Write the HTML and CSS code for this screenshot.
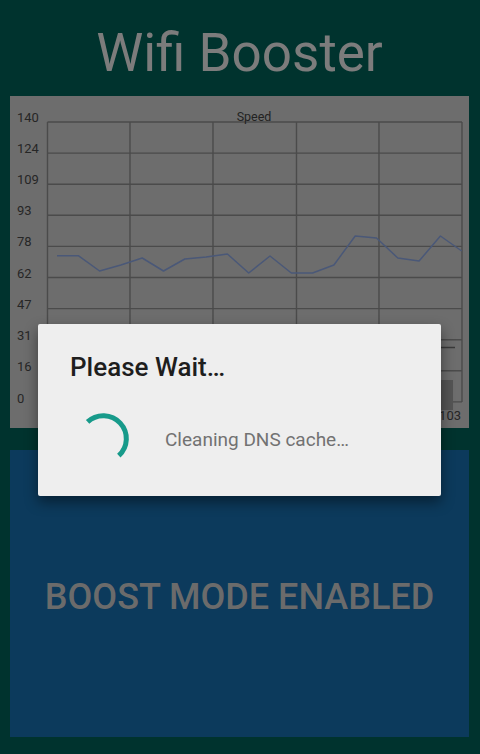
FILE: index.html
```html
<!DOCTYPE html>
<html>
<head>
<meta charset="utf-8">
<link rel="stylesheet" href="styles.css">
</head>
<body>
<div class="screen">
  <h1 class="title">Wifi Booster</h1>
  <div class="chart-card">
    <svg class="chart" width="459" height="332" viewBox="0 0 459 332">
      <g class="grid">
        <line x1="37.5" y1="26" x2="452" y2="26"/>
        <line x1="37.5" y1="57.1" x2="452" y2="57.1"/>
        <line x1="37.5" y1="88.2" x2="452" y2="88.2"/>
        <line x1="37.5" y1="119.3" x2="452" y2="119.3"/>
        <line x1="37.5" y1="150.4" x2="452" y2="150.4"/>
        <line x1="37.5" y1="181.5" x2="452" y2="181.5"/>
        <line x1="37.5" y1="212.6" x2="452" y2="212.6"/>
        <line x1="37.5" y1="243.7" x2="452" y2="243.7"/>
        <line x1="37.5" y1="274.8" x2="452" y2="274.8"/>
        <line x1="37.5" y1="305.9" x2="452" y2="305.9"/>
        <line x1="37.5" y1="26" x2="37.5" y2="306"/>
        <line x1="120" y1="26" x2="120" y2="306"/>
        <line x1="203" y1="26" x2="203" y2="306"/>
        <line x1="286.5" y1="26" x2="286.5" y2="306"/>
        <line x1="369" y1="26" x2="369" y2="306"/>
        <line x1="452" y1="26" x2="452" y2="306"/>
      </g>
      <g class="ylabels">
        <text x="7" y="25.5">140</text>
        <text x="7" y="56.6">124</text>
        <text x="7" y="88.2">109</text>
        <text x="7" y="119.3">93</text>
        <text x="7" y="150.4">78</text>
        <text x="7" y="181.5">62</text>
        <text x="7" y="212.6">47</text>
        <text x="7" y="244">31</text>
        <text x="7" y="275">16</text>
        <text x="7" y="306.5">0</text>
      </g>
      <text class="chart-title" x="244" y="24.5" text-anchor="middle">Speed</text>
      <polyline class="series" points="47,159.7 68.3,159.7 89.6,175 110.9,169 132.2,162 153.5,175 174.8,163 196.1,161 217.4,158 238.7,177 260,160 281.3,177 302.6,177 323.9,169 345.2,140 366.5,142 387.8,162 409.1,165 430.4,140 451.7,155"/>
      <line class="legend-line" x1="431" y1="251.5" x2="445" y2="251.5"/>
      <rect class="legend-bar" x="430" y="284" width="13" height="30"/>
      <text class="xlabel" x="451" y="323.5" text-anchor="end">103</text>
    </svg>
  </div>
  <div class="boost-card">
    <span class="boost-text">BOOST MODE ENABLED</span>
  </div>
</div>

<div class="dialog">
  <div class="dialog-title">Please Wait…</div>
  <div class="dialog-body">
    <svg class="spinner" width="56" height="56" viewBox="0 0 56 56">
      <path d="M 12.6 10.9 A 23 23 0 1 1 43.8 44.7" />
    </svg>
    <span class="dialog-message">Cleaning DNS cache…</span>
  </div>
</div>
</body>
</html>
```

FILE: styles.css
```css
html, body {
  margin: 0;
  padding: 0;
}

body {
  width: 480px;
  height: 754px;
  background: #00332e;
  font-family: Roboto, "Liberation Sans", sans-serif;
  position: relative;
  overflow: hidden;
}

.screen {
  display: flex;
  flex-direction: column;
  padding: 0 11px 0 10px;
}

.title {
  margin: 22px 0 12px;
  height: 62px;
  line-height: 62px;
  text-align: center;
  font-size: 53px;
  font-weight: 400;
  color: #7c7c7c;
}

.chart-card {
  height: 332px;
  background: #6d6d6d;
}

.chart {
  display: block;
}

.grid line {
  stroke: #4b4b4b;
  stroke-width: 1.4;
}

.ylabels text,
.xlabel {
  font-family: Roboto, "Liberation Sans", sans-serif;
  font-size: 13px;
  fill: #262626;
}

.chart-title {
  font-family: Roboto, "Liberation Sans", sans-serif;
  font-size: 12.5px;
  fill: #222222;
}

.series {
  fill: none;
  stroke: #4a5878;
  stroke-width: 1.5;
  stroke-linejoin: round;
}

.legend-line {
  stroke: #3a3a3a;
  stroke-width: 1.5;
}

.legend-bar {
  fill: #545454;
}

.boost-card {
  margin-top: 22px;
  height: 287px;
  background: #0c3a5c;
  display: flex;
  align-items: center;
  justify-content: center;
  padding-top: 7px;
  box-sizing: border-box;
}

.boost-text {
  font-size: 36px;
  font-weight: 500;
  color: #6b6b6b;
}

.dialog {
  position: absolute;
  left: 38px;
  top: 324px;
  width: 403px;
  height: 172px;
  box-sizing: border-box;
  background: #eeeeee;
  border-radius: 2px;
  box-shadow: 0 6px 14px rgba(0, 0, 0, 0.45);
  padding: 28px 32px 30px 32px;
}

.dialog-title {
  height: 30px;
  line-height: 30px;
  font-size: 26px;
  font-weight: 500;
  color: #1e1e1e;
}

.dialog-body {
  margin-top: 29px;
  display: flex;
  align-items: center;
  height: 56px;
}

.spinner {
  margin-left: 5px;
  flex: none;
}

.spinner path {
  fill: none;
  stroke: #179a8a;
  stroke-width: 5;
  stroke-linecap: butt;
}

.dialog-message {
  margin-left: 34px;
  font-size: 19px;
  color: #727272;
}
```
